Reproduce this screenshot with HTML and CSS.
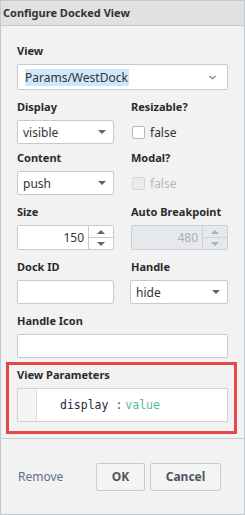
FILE: index.html
```html
<!DOCTYPE html>
<html lang="en">
<head>
    <meta charset="UTF-8">
    <title>Configure Docked View</title>
    <link rel="stylesheet" href="styles.css">
</head>
<body>
    <div class="dialog">
        <div class="dialog-header">Configure Docked View</div>
        <div class="dialog-body">
            <div class="field">
                <label>View</label>
                <div class="control select select-wide">
                    <span class="picked">Params/WestDock</span>
                    <svg class="chevron" width="7" height="5" viewBox="0 0 7 5"><polyline points="0.5,0.8 3.5,3.8 6.5,0.8" fill="none" stroke="#6b747c" stroke-width="1.1"/></svg>
                </div>
            </div>

            <div class="row">
                <div class="field">
                    <label>Display</label>
                    <div class="control select">visible<span class="caret"></span></div>
                </div>
                <div class="field">
                    <label>Resizable?</label>
                    <div class="check"><span class="box"></span>false</div>
                </div>
            </div>

            <div class="row row-tight">
                <div class="field">
                    <label>Content</label>
                    <div class="control select">push<span class="caret"></span></div>
                </div>
                <div class="field">
                    <label>Modal?</label>
                    <div class="check check-off"><span class="box"></span>false</div>
                </div>
            </div>

            <div class="row">
                <div class="field">
                    <label>Size</label>
                    <div class="control spin">
                        <span class="spin-value">150</span>
                        <span class="spin-btns"><span class="up"><i class="tri-up"></i></span><span class="down"><i class="tri-down"></i></span></span>
                    </div>
                </div>
                <div class="field">
                    <label>Auto Breakpoint</label>
                    <div class="control spin spin-off">
                        <span class="spin-value">480</span>
                        <span class="spin-btns"><span class="up"><i class="tri-up"></i></span><span class="down"><i class="tri-down"></i></span></span>
                    </div>
                </div>
            </div>

            <div class="row">
                <div class="field">
                    <label>Dock ID</label>
                    <div class="control"></div>
                </div>
                <div class="field field-handle">
                    <label>Handle</label>
                    <div class="control select">hide<span class="caret"></span></div>
                </div>
            </div>

            <div class="row row-single">
                <div class="field">
                    <label>Handle Icon</label>
                    <div class="control"></div>
                </div>
            </div>

            <div class="params-box field">
                <label>View Parameters</label>
                <div class="params">
                    <div class="gutter"></div>
                    <div class="code"><span class="key">display</span><span class="colon"> :</span><span class="val">value</span></div>
                </div>
            </div>
        </div>
        <div class="dialog-footer">
            <span class="remove">Remove</span>
            <button class="btn btn-ok">OK</button>
            <button class="btn btn-cancel">Cancel</button>
        </div>
    </div>
</body>
</html>
```
FILE: styles.css
```css
body { margin: 0; background: #fff; }
.dialog { width: 245px; height: 515px; box-sizing: border-box; border: 1px solid #c4c8cc; background: #f2f2f2; display: flex; flex-direction: column; font-family: "Noto Sans", sans-serif; color: #2d2d2d; }
.dialog-header { height: 24px; line-height: 24px; padding-left: 2px; background: #e1e1e1; border-bottom: 1px solid #c6cacd; font-size: 11px; font-weight: bold; color: #333; }
.dialog-body { padding: 18px 16px 4px 16px; border-bottom: 1px solid #c8ccd0; }

.field label { display: block; font-size: 11px; font-weight: bold; line-height: 14px; margin-bottom: 6px; color: #2b2b2b; }
.row { display: grid; grid-template-columns: 97px 97px; column-gap: 17px; margin-top: 10px; }
.row-tight { margin-top: 7px; }
.row-single { grid-template-columns: 211px; }
.field-handle .control { margin-left: -1px; }

.control { box-sizing: border-box; height: 24px; background: #fff; border: 1px solid #c5cacf; border-radius: 2px; display: flex; align-items: center; font-size: 12px; color: #333; }
.select { padding: 0 7px 0 5px; justify-content: space-between; }
.select-wide { height: 26px; padding: 0 11px 0 7px; }
.picked { background: #cde8fd; line-height: 17px; padding-right: 1px; }
.caret { width: 0; height: 0; border-left: 4px solid transparent; border-right: 4px solid transparent; border-top: 4px solid #5b6670; }

.check { height: 24px; display: flex; align-items: center; gap: 5px; font-size: 12px; color: #333; }
.check .box { width: 13px; height: 13px; box-sizing: border-box; margin-left: 1px; background: #fff; border: 1px solid #b3b8bd; border-radius: 2px; }
.check-off { color: #b4b9be; }
.check-off .box { background: #e9ebed; border-color: #d3d6d9; }

.spin { height: 25px; }
.spin-value { flex: 1; text-align: right; padding-right: 4px; }
.spin-btns { width: 24px; height: 100%; border-left: 1px solid #c5cacf; display: flex; flex-direction: column; }
.spin-btns span { flex: 1; display: flex; align-items: center; justify-content: center; }
.spin-btns .up { border-bottom: 1px solid #c5cacf; }
.tri-up { width: 0; height: 0; border-left: 4px solid transparent; border-right: 4px solid transparent; border-bottom: 4px solid #5b6670; }
.tri-down { width: 0; height: 0; border-left: 4px solid transparent; border-right: 4px solid transparent; border-top: 4px solid #5b6670; }
.spin-off { background: #e6e9ec; color: #a9afb5; border-color: #cdd1d5; }
.spin-off .spin-btns, .spin-off .up { border-color: #cdd1d5; }
.spin-off .tri-up { border-bottom-color: #a9b0b7; }
.spin-off .tri-down { border-top-color: #a9b0b7; }

.params-box { margin: 4px -9px 0 -11px; padding: 3px 6px 9px 8px; border: 3px solid #e5484a; }
.params { display: flex; height: 34px; box-sizing: border-box; border: 1px solid #cfd3d6; background: #fff; }
.gutter { width: 18px; background: #f5f5f5; border-right: 1px solid #dcdcdc; }
.code { display: flex; align-items: center; padding-left: 23px; font-family: "DejaVu Sans Mono", monospace; font-size: 11.5px; white-space: pre; }
.key { color: #1d2740; }
.colon { color: #4a4a4a; }
.val { color: #52c08a; margin-left: 3px; }

.dialog-footer { flex: 1; display: flex; align-items: center; gap: 5px; padding: 0 23px 0 17px; }
.remove { margin-right: auto; font-size: 12px; color: #5f6f84; }
.btn { height: 28px; box-sizing: border-box; border: 1px solid #c9cdd1; background: #f4f4f4; border-radius: 2px; font-family: "Noto Sans", sans-serif; font-size: 12px; font-weight: bold; color: #4f5760; padding: 0; }
.btn-ok { width: 49px; }
.btn-cancel { width: 71px; }
```
